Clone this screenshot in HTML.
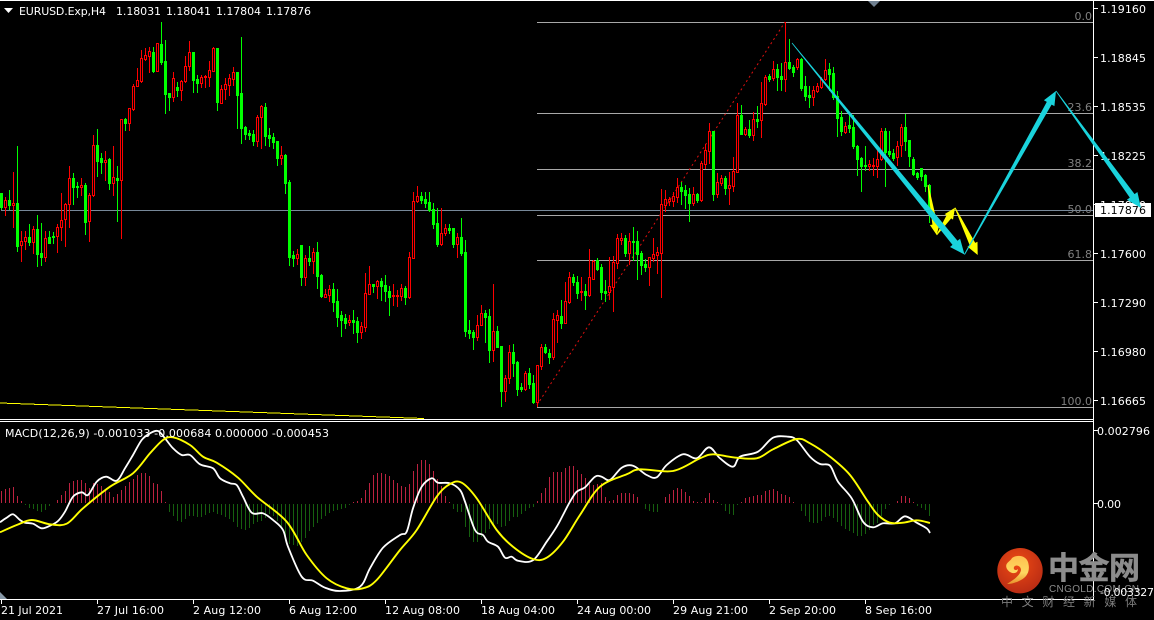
<!DOCTYPE html>
<html><head><meta charset="utf-8">
<style>
html,body{margin:0;padding:0;background:#000;width:1154px;height:620px;overflow:hidden}
svg{display:block;position:absolute;left:0;top:0}
text{font-family:"DejaVu Sans","Liberation Sans","Noto Sans CJK SC",sans-serif;font-size:11px;fill:#fff}
</style></head><body>
<svg id="s" width="1154" height="620" viewBox="0 0 1154 620" xmlns="http://www.w3.org/2000/svg">
<rect width="1154" height="620" fill="#000"/>
<g id="base" shape-rendering="crispEdges">
<line x1="0" y1="403" x2="424" y2="418.5" stroke="#ffff00"/>
<rect x="1" y="210" width="1092" height="1" fill="#778899"/>
<g fill="#a8a8a8">
<rect x="537" y="22" width="556" height="1"/><rect x="537" y="113" width="556" height="1"/><rect x="537" y="169" width="556" height="1"/><rect x="537" y="215" width="556" height="1"/><rect x="537" y="260" width="556" height="1"/><rect x="537" y="407" width="556" height="1"/>
</g>
</g>
<g id="hist" shape-rendering="crispEdges"></g>
<line x1="537" y1="405" x2="785" y2="22" stroke="#e01010" stroke-width="1" stroke-dasharray="2 3"/>
<g id="cand" shape-rendering="crispEdges"></g>
<polyline class="m" fill="none" stroke="#fff" stroke-width="1.8" stroke-linejoin="round" points="0,522.3 6.7,517.7 13,514.3 20,520 25,522.7 33,523.7 41.7,528.3 50,525.7 58,521 65,511.7 73,496.7 81.7,492.3 88,495 96.7,481.7 106,476.7 116.7,480.7 125,468.3 133,455 141.7,440 150,433.3 158,431 165,438.3 173,448.3 181.7,455 190,455 200,464.3 213,468.3 220,478.3 230,483.3 236.7,485 243,496.7 251.7,512.7 263,513.3 273,520 283,530 288,546.7 301.7,576.7 313,580.7 325,587.7 340,591 360,586.7 370,568.3 383,547.7 400,535 406.7,531.7 413,508.3 421.7,486.7 431.7,478.3 438,482.7 450,483.3 460,490 465,501.7 475,530 483,535 488,541.7 498,546.7 505,557.7 511.7,556.7 518,560.7 533,560.3 546.7,541.7 556.7,526.7 563,515 570,501.7 576.7,491.7 585,487.3 595,476.7 601.7,476.7 610,480 621.7,467.7 633,465.7 646.7,475 656.7,477.3 666.7,465 683,454.3 696.7,458.3 709,447.3 720,458.3 733,466.7 740,456.7 758,451.7 773,437.7 788,436.7 796.7,440 810,456.7 820,464 830,465.7 838,481.7 851.7,498.3 863,521.7 873,527.3 883,523.3 895,523.3 905,516.3 916.7,522.7 926.7,528.3 930,533"/>
<polyline class="m" fill="none" stroke="#ffff00" stroke-width="1.9" stroke-linejoin="round" points="0,532.3 16.7,525 31.7,520 50,524.3 66.7,523.7 83,508.3 110,486.7 133,473.3 150,453.3 163,440 173,437.3 190,445 203,456.7 216.7,462.7 238,477.7 256.7,496.7 286.7,521.7 306.7,555 326.7,578.3 346.7,588.3 363,588.3 376.7,580 400,550 416.7,530 436.7,496.7 450,484 461.7,482.7 476.7,498.3 496.7,530 513,546.7 533,559 546.7,557.7 563,541.7 580,515 600,486.7 626.7,474.3 640,469.3 673,471 700,458.3 713,454.3 733,457.3 756.7,458.3 773,449.3 796.7,439 810,443.3 830,456.7 850,475 868,501.7 878,515 890,522.7 903,522.7 916.7,520.3 930,523"/>

<g shape-rendering="crispEdges" fill="#fff">
<rect x="0" y="0" width="1154" height="1"/>
<rect x="0" y="419" width="1094" height="1"/><rect x="0" y="421" width="1094" height="1"/>
<rect x="0" y="599" width="1094" height="1"/>
<rect x="1093" y="0" width="1" height="600"/>
<rect x="1094" y="8" width="4" height="1"/><rect x="1094" y="57" width="4" height="1"/><rect x="1094" y="106" width="4" height="1"/><rect x="1094" y="155" width="4" height="1"/><rect x="1094" y="204" width="4" height="1"/><rect x="1094" y="253" width="4" height="1"/><rect x="1094" y="302" width="4" height="1"/><rect x="1094" y="351" width="4" height="1"/><rect x="1094" y="400" width="4" height="1"/>
<rect x="1094" y="503" width="4" height="1"/><rect x="1094" y="430" width="4" height="1"/>
<rect x="1" y="600" width="1" height="4"/><rect x="97" y="600" width="1" height="4"/><rect x="193" y="600" width="1" height="4"/><rect x="289" y="600" width="1" height="4"/><rect x="385" y="600" width="1" height="4"/><rect x="481" y="600" width="1" height="4"/><rect x="577" y="600" width="1" height="4"/><rect x="673" y="600" width="1" height="4"/><rect x="769" y="600" width="1" height="4"/><rect x="865" y="600" width="1" height="4"/>
</g>
<polygon points="868,1 880,1 874,7" fill="#708090"/>
<polygon points="0,592 0,599 7,599" fill="#8899a8"/>
<polygon points="4,8 13,8 8.5,13" fill="#fff"/>

<text x="19" y="15" textLength="87" lengthAdjust="spacing">EURUSD.Exp,H4</text>
<text x="116" y="15" textLength="45">1.18031</text><text x="166" y="15" textLength="45">1.18041</text><text x="216" y="15" textLength="45">1.17804</text><text x="266" y="15" textLength="45">1.17876</text>

<text x="1092" y="20" text-anchor="end" style="fill:#808080">0.0</text>
<text x="1092" y="111" text-anchor="end" style="fill:#808080">23.6</text>
<text x="1092" y="167" text-anchor="end" style="fill:#808080">38.2</text>
<text x="1092" y="213" text-anchor="end" style="fill:#808080">50.0</text>
<text x="1092" y="258" text-anchor="end" style="fill:#808080">61.8</text>
<text x="1092" y="405" text-anchor="end" style="fill:#808080">100.0</text>

<text x="1100" y="13" textLength="46">1.19160</text>
<text x="1100" y="62" textLength="46">1.18845</text>
<text x="1100" y="111" textLength="46">1.18535</text>
<text x="1100" y="160" textLength="46">1.18225</text>
<text x="1100" y="209" textLength="46">1.17910</text>
<text x="1100" y="258" textLength="46">1.17600</text>
<text x="1100" y="307" textLength="46">1.17290</text>
<text x="1100" y="356" textLength="46">1.16980</text>
<text x="1100" y="405" textLength="46">1.16665</text>
<rect x="1095" y="203" width="56" height="14" fill="#fff" shape-rendering="crispEdges"/>
<text x="1100" y="214" textLength="46" style="fill:#000">1.17876</text>

<g id="arrows"></g>

<text x="5" y="437" textLength="324" lengthAdjust="spacing">MACD(12,26,9) -0.001033 -0.000684 0.000000 -0.000453</text>
<text x="1097" y="435" textLength="53">0.002796</text>
<text x="1097" y="508" textLength="24">0.00</text>

<text x="1" y="614" textLength="62">21 Jul 2021</text>
<text x="97" y="614" textLength="67">27 Jul 16:00</text>
<text x="193" y="614" textLength="68">2 Aug 12:00</text>
<text x="289" y="614" textLength="68">6 Aug 12:00</text>
<text x="385" y="614" textLength="75">12 Aug 08:00</text>
<text x="481" y="614" textLength="74">18 Aug 04:00</text>
<text x="577" y="614" textLength="74">24 Aug 00:00</text>
<text x="673" y="614" textLength="75">29 Aug 21:00</text>
<text x="769" y="614" textLength="67">2 Sep 20:00</text>
<text x="865" y="614" textLength="67">8 Sep 16:00</text>

<defs>
<radialGradient id="lg" cx="45%" cy="35%" r="70%"><stop offset="0" stop-color="#ee4a14"/><stop offset="1" stop-color="#b62a14"/></radialGradient>
<linearGradient id="ly" x1="0" y1="0" x2="0" y2="1"><stop offset="0" stop-color="#ffc050"/><stop offset=".6" stop-color="#fdd860"/><stop offset="1" stop-color="#e8902a"/></linearGradient>
</defs>
<circle cx="1020" cy="570.7" r="22.7" fill="url(#lg)"/>
<path d="M1007 569C1004 563 1010 562 1012 558C1018 554 1026 556 1028 562C1031 572 1026 578 1019 581C1015 583 1011 584 1007 584C1013 580 1020 576 1021 570C1021 566 1016 564 1014 567C1013 570 1016 571 1018 569C1018 574 1011 575 1007 569Z" fill="url(#ly)"/>
<text x="1048" y="579" style="font-size:31px;font-weight:700;fill:#8c8c8c;stroke:#8c8c8c;stroke-width:.5;font-family:'Noto Sans CJK SC',sans-serif" textLength="92">中金网</text>
<text x="1049" y="592" style="font-size:10px;fill:#8c8c8c;font-family:'Liberation Sans',sans-serif" textLength="90">CNGOLD.COM.CN</text>
<text x="1001" y="606" style="font-size:12px;fill:#7c7c7c;font-family:'Noto Sans CJK SC',sans-serif" textLength="136" lengthAdjust="spacing">中文财经新媒体</text>
<text x="1100" y="596" textLength="54">-0.003327</text>
</svg>
<script>
var D="g,193,193,207,209;r,197,200,207,215;g,190,200,205,209;r,172,203,205,227;g,146,203,246,251;r,231,241,245,261;r,231,237,241,249;g,224,237,242,245;r,226,229,242,253;g,215,229,254,266;g,223,253,257,265;r,231,238,257,261;g,231,237,243,243;g,232,236,237,243;r,224,227,236,252;r,193,220,227,240;r,203,204,219,246;r,166,178,204,227;g,173,178,187,204;g,182,186,187,197;r,178,185,187,195;g,183,185,222,234;r,193,195,221,241;r,135,145,195,196;g,129,145,161,176;g,153,158,162,173;r,151,160,162,180;g,158,159,183,189;r,146,177,183,195;g,166,178,180,221;r,119,119,180,238;g,118,119,123,130;r,109,108,123,130;r,84,86,109,110;r,68,80,86,86;r,50,58,81,82;r,48,55,59,60;r,47,51,56,72;g,47,52,71,72;r,43,43,71,71;g,22,44,62,64;g,40,61,94,113;g,93,93,97,110;r,72,78,97,101;g,82,87,90,96;r,80,81,90,100;r,56,66,81,82;r,41,52,66,70;g,52,52,80,92;g,75,79,83,92;r,75,77,83,87;r,75,76,77,87;r,61,70,77,86;r,47,48,71,71;g,48,48,102,110;r,85,89,103,103;r,78,84,89,99;r,74,78,85,95;r,67,72,79,85;g,72,72,95,128;g,37,93,128,143;g,126,127,134,139;g,130,133,135,139;g,130,134,141,145;r,115,117,141,146;r,105,106,117,148;g,103,107,136,145;g,128,135,138,146;g,133,137,142,148;g,141,141,158,165;r,146,155,158,164;g,154,155,183,193;g,180,182,257,265;g,251,255,258,266;r,249,254,258,264;g,245,245,277,285;r,255,258,277,285;g,246,258,261,265;r,248,252,261,273;g,242,252,276,288;g,274,275,296,297;r,289,294,297,297;r,285,289,295,301;g,283,289,302,311;g,289,301,317,326;g,311,315,320,336;g,314,318,323,328;r,315,320,322,325;g,310,320,322,333;g,317,321,332,342;r,322,326,332,338;r,273,293,327,331;r,266,284,294,294;g,284,284,286,292;r,280,281,286,298;g,278,281,286,300;g,275,285,291,301;g,286,291,297,315;r,284,295,296,305;r,290,295,296,306;r,284,288,296,300;g,286,288,297,304;r,252,257,297,298;r,192,201,258,258;r,186,196,201,202;g,192,196,200,203;g,192,199,203,207;g,192,202,210,211;g,203,209,224,228;g,208,223,244,246;r,208,233,244,245;r,224,228,233,235;g,224,228,230,233;g,228,228,244,247;r,233,237,244,257;g,218,237,253,255;g,240,252,331,336;g,320,330,333,338;g,330,332,337,349;r,315,325,337,340;r,305,313,325,325;g,310,313,317,342;g,309,316,350,362;r,284,331,350,361;g,326,331,347,347;g,346,346,391,406;r,375,378,391,401;r,345,352,378,383;g,344,352,363,376;g,361,362,389,395;g,383,387,389,391;r,371,373,389,390;g,368,373,384,388;g,375,383,402,403;r,365,365,402,406;r,344,347,366,369;g,344,347,352,353;g,349,353,357,363;r,313,319,357,359;r,310,315,320,342;g,300,316,323,328;r,282,301,323,323;r,272,277,302,303;g,274,277,282,285;g,276,282,293,298;r,277,291,292,300;g,284,291,295,309;r,249,277,295,296;r,260,261,279,279;g,258,260,269,270;g,264,267,292,299;g,280,291,293,301;r,257,286,292,299;r,256,262,287,311;r,234,238,263,268;r,233,238,240,244;g,235,238,253,256;r,233,241,253,264;g,227,241,242,260;g,231,241,254,279;g,251,253,265,274;g,259,264,267,271;r,257,257,267,285;r,238,254,258,261;r,247,252,255,273;r,189,204,253,297;r,190,199,205,211;r,197,199,201,205;r,192,196,201,206;r,178,187,197,202;g,182,187,191,204;g,185,190,195,208;g,188,194,203,221;r,187,194,203,205;g,193,194,200,202;r,161,163,200,201;r,144,150,164,168;r,123,131,151,163;g,131,131,194,200;r,173,182,194,197;r,175,178,183,185;g,176,178,188,194;r,172,185,188,204;r,157,171,186,191;r,103,115,172,172;g,105,115,134,134;r,127,129,134,135;g,120,129,135,137;r,112,119,135,140;g,106,119,121,127;r,82,103,120,137;r,75,77,104,105;g,74,76,79,81;r,61,69,78,80;g,64,69,77,90;g,63,76,79,90;r,22,62,79,91;g,39,62,68,69;g,65,67,72,76;r,58,59,67,69;g,58,59,88,90;g,76,86,96,100;g,86,95,97,107;r,86,90,97,105;r,83,86,91,92;r,77,79,87,88;r,59,70,79,80;g,63,69,74,90;g,67,73,97,99;g,91,96,118,136;g,111,117,131,135;r,122,126,132,133;g,114,125,128,132;g,115,127,146,148;g,145,146,159,175;g,157,158,166,191;g,146,165,166,170;r,160,164,166,170;r,158,165,166,175;r,149,159,166,177;r,128,131,159,160;g,128,131,152,186;g,131,151,154,156;g,149,153,158,160;r,141,146,157,165;r,124,127,145,156;g,114,127,141,150;g,140,140,156,166;g,157,159,174,175;g,172,173,177,179;g,168,168,176,180;g,174,175,186,191;g,184,185,211,222";
var H=[12,14,15,16,7,2,-1,-4,-5,-7,-8,-6,-2,0,3,8,12,20,22,23,23,20,15,20,19,17,13,11,6,9,13,17,21,24,28,30,30,27,20,19,12,1,-8,-12,-17,-18,-15,-12,-12,-13,-13,-11,-9,-8,-10,-11,-13,-15,-18,-23,-25,-26,-24,-20,-18,-17,-14,-10,-12,-17,-25,-32,-40,-41,-42,-38,-34,-27,-23,-19,-15,-12,-9,-7,-6,-5,-4,-1,1,2,5,13,20,28,30,30,29,27,23,20,17,16,19,32,39,43,43,39,32,24,17,7,1,-5,-8,-8,-23,-33,-38,-38,-33,-29,-25,-20,-20,-23,-22,-17,-13,-13,-10,-7,-4,-3,2,10,15,26,31,31,31,35,37,37,33,29,25,19,18,19,20,6,2,3,8,10,10,10,9,6,0,-5,-7,-8,-8,0,6,9,13,15,14,11,7,2,1,1,5,10,3,1,-1,-7,-10,-11,-1,1,5,6,7,8,8,12,13,14,12,9,8,6,1,0,-7,-12,-18,-19,-19,-17,-13,-12,-14,-18,-22,-25,-27,-29,-32,-32,-30,-26,-21,-19,-12,-5,-1,0,2,7,7,5,1,-2,-4,-6,-12];
function R(x,y,w,h,c){return '<rect x="'+x+'" y="'+y+'" width="'+w+'" height="'+h+'" fill="'+c+'"/>'}
var o='';
D.split(';').forEach(function(s,n){var a=s.split(','),g=a[0]=='g',c=g?'#00ff00':'#ff0000',wt=+a[1],bt=+a[2],bb=+a[3],wb=+a[4],x=4*n;
 o+=R(x+1,Math.min(wt,bt),1,Math.max(wb,bb)-Math.min(wt,bt)+1,c);
 var h=Math.max(bb-bt+1,2);
 o+=R(x,bt,3,h,c);
 if(!g&&h>2)o+=R(x+1,bt+1,1,h-2,'#000');
});
document.getElementById('cand').innerHTML=o;
var p='';
H.forEach(function(v,n){var x=1+4*n;if(v>0)p+=R(x,503-v,1,v,'#bc2240');else if(v<0)p+=R(x,504,1,-v,'#16600f');});
document.getElementById('hist').innerHTML=p;
function A(x1,y1,x2,y2,w0,sw,hw,hl,c){var dx=x2-x1,dy=y2-y1,L=Math.sqrt(dx*dx+dy*dy),u=dx/L,v=dy/L,nx=-v,ny=u,bx=x2-u*hl,by=y2-v*hl;
 var P=[[x1+nx*w0/2,y1+ny*w0/2],[bx+nx*sw/2,by+ny*sw/2],[bx+nx*hw/2,by+ny*hw/2],[x2,y2],[bx-nx*hw/2,by-ny*hw/2],[bx-nx*sw/2,by-ny*sw/2],[x1-nx*w0/2,y1-ny*w0/2]];
 return '<polygon fill="'+c+'" points="'+P.map(function(q){return q[0].toFixed(1)+','+q[1].toFixed(1)}).join(' ')+'"/>'}
var cy='#1ad3dc',ye='#ffff00',ar='';
ar+=A(928,185,936.7,235,.8,5,10,11,ye);
ar+=A(936.7,235,955,207.7,.8,5.5,10,11,ye);
ar+=A(955,207.7,977.7,255,.8,6,11,12,ye);
ar+=A(792,43,964.5,254.5,.8,6.5,13,15,cy);
ar+=A(964.5,254.5,1056,91,1,5.5,12,14,cy);
ar+=A(1056,91,1141,208,.8,6,13,15,cy);
document.getElementById('arrows').innerHTML=ar;
Array.prototype.forEach.call(document.querySelectorAll('polyline.m'),function(l){
 var q=l.getAttribute('points').split(' ').map(function(t){return t.split(',').map(Number)}),d='M'+q[0][0]+' '+q[0][1];
 for(var i=0;i<q.length-1;i++){var a=q[i?i-1:0],b=q[i],e=q[i+1],f=q[i+2<q.length?i+2:i+1];
  d+='C'+(b[0]+(e[0]-a[0])/6).toFixed(1)+' '+(b[1]+(e[1]-a[1])/6).toFixed(1)+' '+(e[0]-(f[0]-b[0])/6).toFixed(1)+' '+(e[1]-(f[1]-b[1])/6).toFixed(1)+' '+e[0]+' '+e[1];}
 var n=document.createElementNS('http://www.w3.org/2000/svg','path');
 n.setAttribute('d',d);n.setAttribute('fill','none');n.setAttribute('stroke',l.getAttribute('stroke'));n.setAttribute('stroke-width',l.getAttribute('stroke-width'));n.setAttribute('stroke-linejoin','round');
 l.parentNode.replaceChild(n,l);
});
</script>
</body></html>
